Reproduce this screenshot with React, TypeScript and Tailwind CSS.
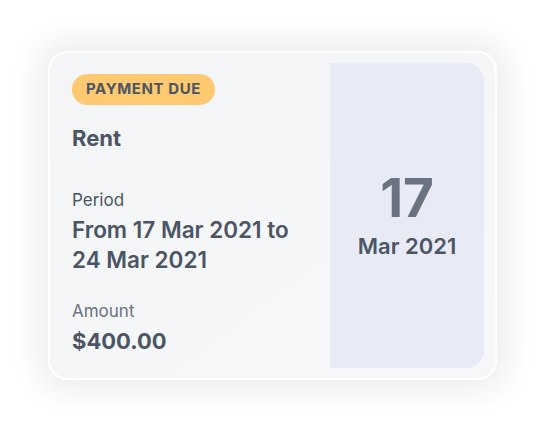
import React from "react";

export default function App() {
  return (
    <div className="w-[548px] h-[426px] bg-white pt-[51px] pl-[48px]" style={{ fontFamily: "Inter, 'Noto Sans', sans-serif" }}>
      <div className="w-[449px] h-[329px] flex rounded-[20px] border-2 border-white bg-gradient-to-br from-[#f4f5f7] to-[#f6f7f9] shadow-[0_0_30px_12px_rgba(0,0,0,0.07)] overflow-hidden">
        <div className="flex-1 pl-[22px] pt-[21px] flex flex-col items-start text-[#4b5563]">
          <div className="h-[31px] px-[14px] rounded-full bg-[#fec971] flex items-center text-[15px] font-bold tracking-[0.04em] text-[#4b5563]">
            PAYMENT DUE
          </div>
          <div className="mt-[19px] text-[22px] leading-[28px] font-bold">Rent</div>
          <div className="mt-[36px] text-[17px] leading-[24px] text-[#4b5563]">Period</div>
          <div className="mt-[3px] text-[22.5px] leading-[30px] font-semibold">
            From 17 Mar 2021 to
            <br />
            24 Mar 2021
          </div>
          <div className="mt-[24px] text-[17px] leading-[24px] text-[#6b7280]">Amount</div>
          <div className="mt-[3px] text-[22px] leading-[30px] font-bold">$400.00</div>
        </div>
        <div className="w-[154px] my-[10px] mr-[11px] rounded-r-[18px] bg-[#e8eaf6] flex flex-col items-center justify-center pt-[2px]">
          <div className="text-[53px] leading-[50px] font-bold text-[#6b7280]">17</div>
          <div className="mt-[9px] text-[22px] leading-[28px] font-semibold text-[#4b5563]">Mar 2021</div>
        </div>
      </div>
    </div>
  );
}
